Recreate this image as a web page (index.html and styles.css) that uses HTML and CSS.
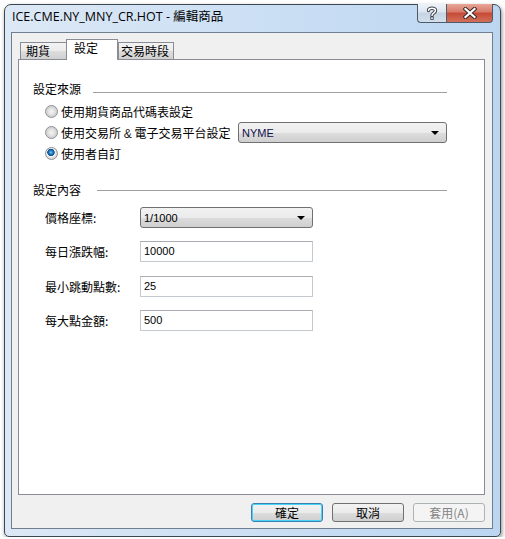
FILE: index.html
```html
<!DOCTYPE html>
<html lang="zh-Hant">
<head>
    <meta charset="UTF-8">
    <title>編輯商品</title>
    <link rel="stylesheet" href="styles.css">
</head>
<body>
    <div class="window">
        <div class="titlebar">
            <span class="title">ICE.CME.NY_MNY_CR.HOT - 編輯商品</span>
            <div class="caption-buttons">
                <div class="cap-btn help">
                    <svg width="12" height="14" viewBox="0 0 12 14">
                        <path d="M2.5 4.5 C2.5 1.5 9.5 1.5 9.5 4.5 C9.5 7 6 6.8 6 9.5" fill="none" stroke="#3a3f46" stroke-width="3.4" stroke-linecap="round"/>
                        <path d="M2.5 4.5 C2.5 1.5 9.5 1.5 9.5 4.5 C9.5 7 6 6.8 6 9.5" fill="none" stroke="#fff" stroke-width="1.5" stroke-linecap="round"/>
                        <rect x="4.3" y="10.6" width="3.4" height="3.2" fill="#3a3f46"/>
                        <rect x="5.2" y="11.4" width="1.6" height="1.6" fill="#fff"/>
                    </svg>
                </div>
                <div class="cap-btn close">
                    <svg width="14" height="12" viewBox="0 0 14 12">
                        <path d="M2.5 2 L11.5 10 M11.5 2 L2.5 10" stroke="#3a2a2a" stroke-width="4.2" stroke-linecap="square"/>
                        <path d="M2.5 2 L11.5 10 M11.5 2 L2.5 10" stroke="#fff" stroke-width="2.2" stroke-linecap="square"/>
                    </svg>
                </div>
            </div>
        </div>

        <div class="client">
            <div class="tabs">
                <div class="tab tab-futures">期貨</div>
                <div class="tab active">設定</div>
                <div class="tab tab-session">交易時段</div>
            </div>

            <div class="panel">
                <!-- 設定來源 -->
                <div class="group-title">
                    <span>設定來源</span>
                    <div class="group-line"></div>
                </div>
                <div class="radio-row">
                    <span class="radio"></span>
                    <label>使用期貨商品代碼表設定</label>
                </div>
                <div class="radio-row">
                    <span class="radio"></span>
                    <label>使用交易所 <span class="amp">&amp;</span> 電子交易平台設定</label>
                    <div class="combo combo-exchange">
                        <span>NYME</span>
                        <span class="arrow"></span>
                    </div>
                </div>
                <div class="radio-row">
                    <span class="radio checked"></span>
                    <label>使用者自訂</label>
                </div>

                <!-- 設定內容 -->
                <div class="group-title second">
                    <span>設定內容</span>
                    <div class="group-line"></div>
                </div>
                <div class="form-rows">
                    <div class="form-row">
                        <label>價格座標:</label>
                        <div class="combo combo-field">
                            <span>1/1000</span>
                            <span class="arrow"></span>
                        </div>
                    </div>
                    <div class="form-row">
                        <label>每日漲跌幅:</label>
                        <div class="text-input">10000</div>
                    </div>
                    <div class="form-row">
                        <label>最小跳動點數:</label>
                        <div class="text-input">25</div>
                    </div>
                    <div class="form-row">
                        <label>每大點金額:</label>
                        <div class="text-input">500</div>
                    </div>
                </div>
            </div>

            <div class="buttons">
                <button class="btn default">確定</button>
                <button class="btn">取消</button>
                <button class="btn" disabled>套用(A)</button>
            </div>
        </div>
    </div>
</body>
</html>
```

FILE: styles.css
```css
body {
    margin: 0;
    padding: 0;
    background-color: #ffffff;
    font-family: "Liberation Sans", "Noto Sans CJK TC", sans-serif;
    font-size: 12px;
    color: #000;
}

.window {
    box-sizing: border-box;
    width: 497px;
    height: 533px;
    margin: 4px 0 0 4px;
    border: 1px solid #3d4752;
    border-radius: 7px 7px 5px 5px;
    background: linear-gradient(to right, #dce8f5 0%, #cfe1f4 40%, #bcd6f1 100%);
    box-shadow: 1px 2px 4px rgba(0, 0, 0, 0.45);
    display: flex;
    flex-direction: column;
}

.titlebar {
    height: 27px;
    display: flex;
    align-items: flex-start;
}

.title {
    padding: 4px 0 0 7px;
    line-height: 16px;
    font-family: "Open Sans", "Noto Sans CJK TC", sans-serif;
    font-size: 12.5px;
    color: #000;
    white-space: nowrap;
}

.caption-buttons {
    margin-left: auto;
    margin-right: 7px;
    margin-top: -1px;
    display: flex;
}

.cap-btn {
    box-sizing: border-box;
    height: 19px;
    display: flex;
    align-items: center;
    justify-content: center;
    border: 1px solid #4f5b69;
    border-top: none;
}

.cap-btn.help {
    width: 29px;
    border-right: none;
    border-radius: 0 0 0 4px;
    background: linear-gradient(to bottom, #eef3f9 0%, #dbe5f0 45%, #c5d3e3 50%, #d3dfec 100%);
}

.cap-btn.close {
    width: 47px;
    border-radius: 0 0 4px 0;
    background: linear-gradient(to bottom, #e8a697 0%, #d77a69 45%, #c64a36 50%, #d2705a 100%);
}

.client {
    flex: 1;
    margin: 0 7px 7px 6px;
    border: 1px solid #6f7f90;
    background-color: #f0f0f0;
    padding: 6px 7px 0 6px;
    display: flex;
    flex-direction: column;
}

.tabs {
    height: 20px;
    display: flex;
    align-items: flex-end;
    padding-left: 2px;
    position: relative;
    z-index: 1;
}

.tab {
    box-sizing: border-box;
    height: 17px;
    line-height: 15px;
    border: 1px solid #898c95;
    border-bottom: none;
    background: linear-gradient(to bottom, #f3f3f3 0%, #ebebeb 50%, #dddddd 51%, #d0d0d0 100%);
    font-family: "Noto Sans CJK TC", sans-serif;
    white-space: nowrap;
}

.tab-futures {
    width: 47px;
    padding-left: 5px;
}

.tab.active {
    width: 52px;
    height: 21px;
    margin-left: -1px;
    margin-bottom: -1px;
    padding-left: 7px;
    line-height: 15px;
    background: #fff;
}

.tab-session {
    width: 56px;
    margin-left: 0;
    padding-left: 2px;
}

.panel {
    box-sizing: border-box;
    height: 436px;
    border: 1px solid #898c95;
    background-color: #fff;
    padding: 21px 37px 0 14px;
}

.group-title {
    display: flex;
    align-items: center;
    height: 16px;
    line-height: 16px;
    font-family: "Noto Sans CJK TC", sans-serif;
}

.group-line {
    flex: 1;
    height: 1px;
    margin-left: 12px;
    margin-top: 6px;
    background-color: #a0a0a0;
}

.group-title.second {
    margin-top: 18px;
}

.group-title.second .group-line {
    margin-left: 16px;
    margin-top: 0;
}

.radio-row {
    height: 21px;
    display: flex;
    align-items: center;
    padding-left: 12px;
    font-family: "Noto Sans CJK TC", sans-serif;
}

.group-title + .radio-row {
    margin-top: 4px;
}

.radio {
    box-sizing: border-box;
    width: 13px;
    height: 13px;
    border-radius: 50%;
    border: 1px solid #8c8f94;
    background: radial-gradient(circle at 50% 50%, #f4f4f4 0, #e4e4e4 3px, #cfcfcf 5px, #f2f2f2 6px);
    margin-right: 3px;
    flex: none;
}

.radio.checked {
    background: radial-gradient(circle at 45% 40%, #8fd1f7 0, #2a86c8 1.5px, #0d4f8f 3.4px, #f6f6f6 4px, #dcdcdc 5.5px);
}

.amp {
    font-family: "Liberation Sans", sans-serif;
    color: #1a1a1a;
}

.combo {
    box-sizing: border-box;
    height: 21px;
    border: 1px solid #707070;
    border-radius: 3px;
    background: linear-gradient(to bottom, #f2f2f2 0%, #ebebeb 50%, #dddddd 51%, #cfcfcf 100%);
    display: flex;
    align-items: center;
    padding: 0 7px 0 3px;
    font-family: "Liberation Sans", sans-serif;
    font-size: 11px;
    color: #10104a;
}

.combo-exchange {
    width: 209px;
    margin-left: auto;
}

.arrow {
    margin-left: auto;
    width: 0;
    height: 0;
    border-left: 4px solid transparent;
    border-right: 4px solid transparent;
    border-top: 4px solid #000;
}

.form-rows {
    margin-top: 9px;
    padding-left: 12px;
    display: flex;
    flex-direction: column;
    gap: 13px;
}

.form-row {
    height: 21px;
    display: flex;
    align-items: center;
}

.form-row:nth-child(3) {
    margin-top: 1px;
}

.form-row label {
    width: 95px;
    font-family: "Noto Sans CJK TC", sans-serif;
}

.form-row .combo,
.text-input {
    width: 173px;
}

.combo-field {
    color: #000;
}

.text-input {
    box-sizing: border-box;
    height: 21px;
    border: 1px solid #c5c9d0;
    border-top-color: #abadb3;
    background: #fff;
    padding: 0 3px;
    line-height: 19px;
    font-family: "Liberation Sans", sans-serif;
    font-size: 11px;
}

.buttons {
    margin-top: 8px;
    display: flex;
    justify-content: flex-end;
    gap: 9px;
}

.btn {
    box-sizing: border-box;
    width: 72px;
    height: 19px;
    padding: 0;
    border: 1px solid #707070;
    border-radius: 3px;
    background: linear-gradient(to bottom, #f2f2f2 0%, #ebebeb 50%, #dddddd 51%, #cfcfcf 100%);
    font-family: "Noto Sans CJK TC", sans-serif;
    font-size: 12px;
    line-height: 16px;
    color: #000;
}

.btn.default {
    border-color: #3c7fb1;
    box-shadow: inset 0 0 0 1px #48d3fb;
}

.btn:disabled {
    border-color: #adb2b5;
    background: #f4f4f4;
    color: #838383;
}
```
